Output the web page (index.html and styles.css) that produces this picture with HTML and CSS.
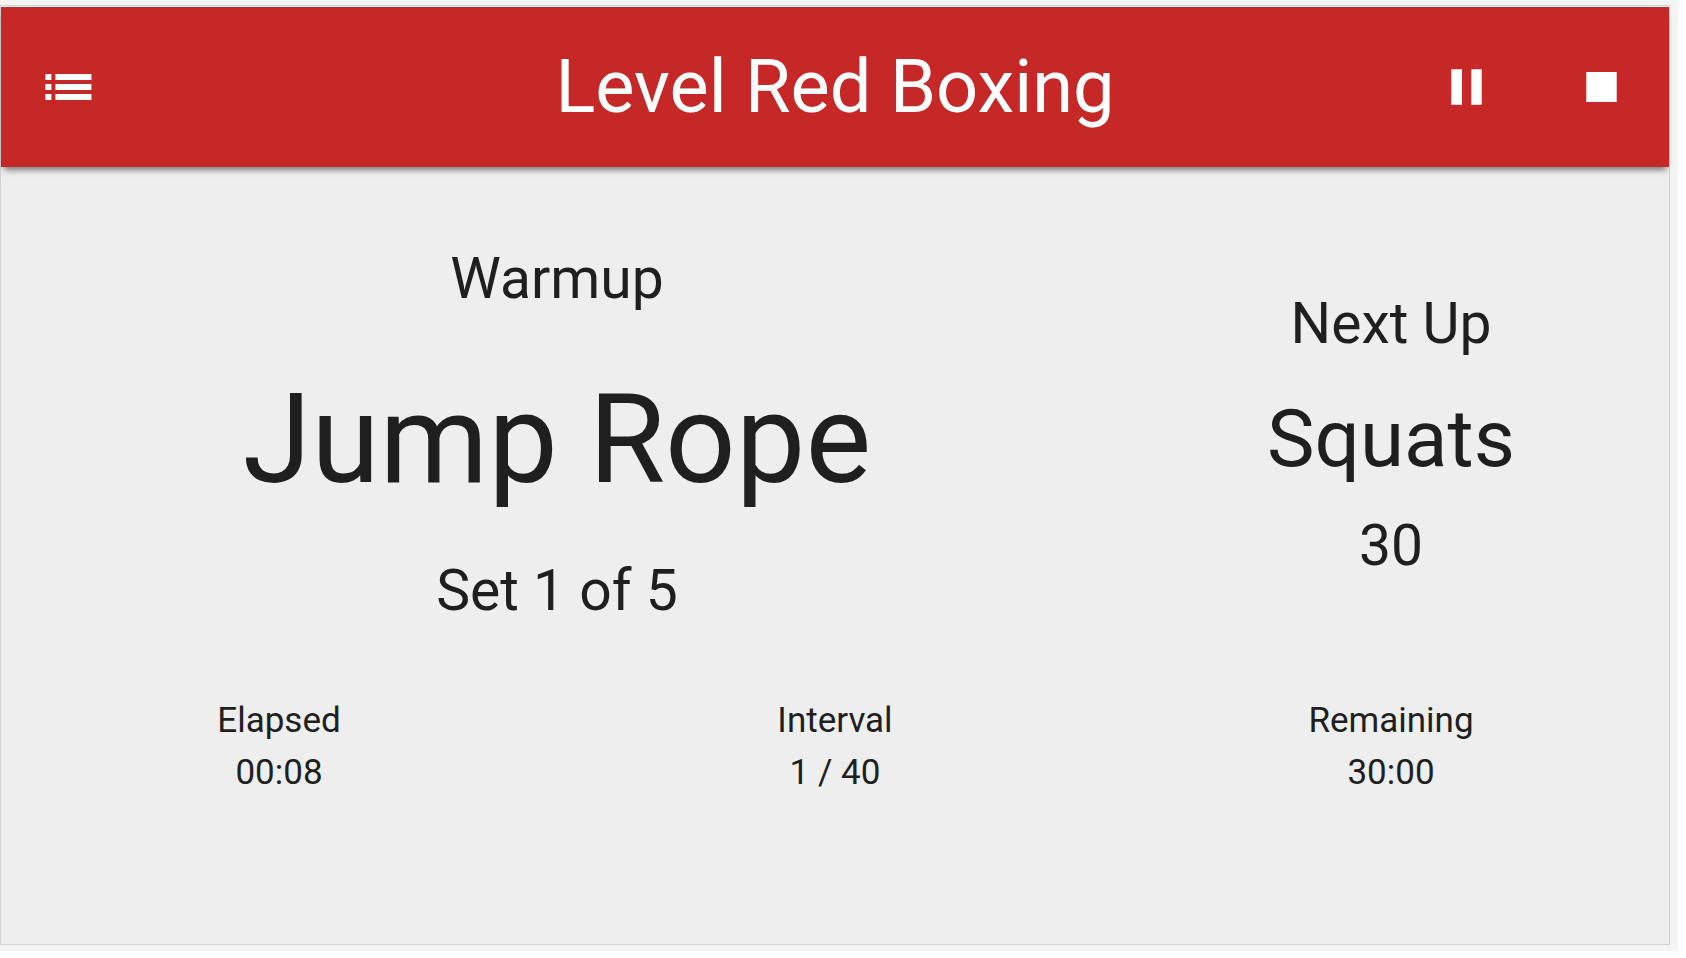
FILE: index.html
```html
<!DOCTYPE html>
<html lang="en">
<head>
<meta charset="utf-8">
<meta name="viewport" content="width=device-width, initial-scale=1">
<title>Level Red Boxing</title>
<link rel="stylesheet" href="styles.css">
</head>
<body>
<div class="backdrop">
  <div class="app">
    <header class="bar">
      <button class="bar-button" type="button" aria-label="Interval list">
        <svg width="47" height="26" viewBox="0 0 47 26" fill="currentColor" aria-hidden="true">
          <path d="M.4 0h6v6h-6zM10.4 0h36v6h-36zM.4 10h6v6h-6zM10.4 10h36v6h-36zM.4 20h6v6h-6zM10.4 20h36v6h-36z"/>
        </svg>
      </button>
      <h1 class="title">Level Red Boxing</h1>
      <div class="actions">
        <button class="bar-button" type="button" aria-label="Pause">
          <svg width="31" height="36" viewBox="0 0 31 36" fill="currentColor" aria-hidden="true">
            <path d="M.3.3h10.7v35.4H.3zM20.3.3h10.4v35.4H20.3z"/>
          </svg>
        </button>
        <button class="bar-button" type="button" aria-label="Stop">
          <svg width="31" height="30" viewBox="0 0 31 30" fill="currentColor" aria-hidden="true">
            <path d="M.3 0h30.4v30H.3z"/>
          </svg>
        </button>
      </div>
    </header>
    <main class="content">
      <div class="intervals">
        <section class="current">
          <p class="phase">Warmup</p>
          <h2 class="exercise">Jump Rope</h2>
          <p class="set">Set 1 of 5</p>
        </section>
        <section class="next">
          <p class="next-label">Next Up</p>
          <h2 class="next-exercise">Squats</h2>
          <p class="next-count">30</p>
        </section>
      </div>
      <dl class="stats">
        <div><dt>Elapsed</dt><dd>00:08</dd></div>
        <div><dt>Interval</dt><dd>1 / 40</dd></div>
        <div><dt>Remaining</dt><dd>30:00</dd></div>
      </dl>
    </main>
  </div>
</div>
</body>
</html>
```
FILE: styles.css
```css
* {
  box-sizing: border-box;
}

body {
  display: flex;
  min-height: 100vh;
  margin: 0;
  padding: 0 8px 7px 0;
  background: #fff;
  color: #1f1f1f;
  font-family: Roboto, "Liberation Sans", sans-serif;
}

h1,
h2,
p,
dl,
dd {
  margin: 0;
  font-weight: 400;
}

.backdrop {
  display: flex;
  flex: 1;
  padding: 5px 8px 6px 0;
  background: #f4f4f4;
}

.app {
  display: flex;
  flex: 1;
  flex-direction: column;
  padding-top: 1px;
  border: 1px solid #d3d3d3;
  background: linear-gradient(#fff 1px, #eee 1px);
}

.bar {
  display: grid;
  grid-template-columns: 1fr auto 1fr;
  align-items: center;
  height: 160px;
  background: #c62828;
  color: #fff;
  box-shadow: 0 6px 6px -3px rgba(0, 0, 0, 0.5);
}

.bar-button {
  display: inline-flex;
  align-items: center;
  justify-content: center;
  width: 135px;
  height: 135px;
  padding: 0;
  border: 0;
  background: none;
  color: inherit;
  cursor: pointer;
}

.title {
  font-size: 74px;
  line-height: 96px;
}

.actions {
  display: flex;
  justify-content: flex-end;
}

.content {
  display: flex;
  flex-direction: column;
  gap: 66px;
  padding-top: 64px;
  text-align: center;
}

.intervals {
  display: grid;
  grid-template-columns: 2fr 1fr;
  align-items: center;
}

.phase,
.set,
.next-label,
.next-count {
  font-size: 57px;
}

.phase,
.next-label {
  line-height: 96px;
}

.exercise {
  font-size: 124px;
  line-height: 226px;
}

.set {
  line-height: 76px;
}

.next {
  padding-top: 2px;
}

.next-exercise {
  font-size: 80px;
  line-height: 134px;
}

.next-count {
  line-height: 80px;
}

.stats {
  display: grid;
  grid-template-columns: repeat(3, 1fr);
  font-size: 35px;
  line-height: 52px;
}
```
